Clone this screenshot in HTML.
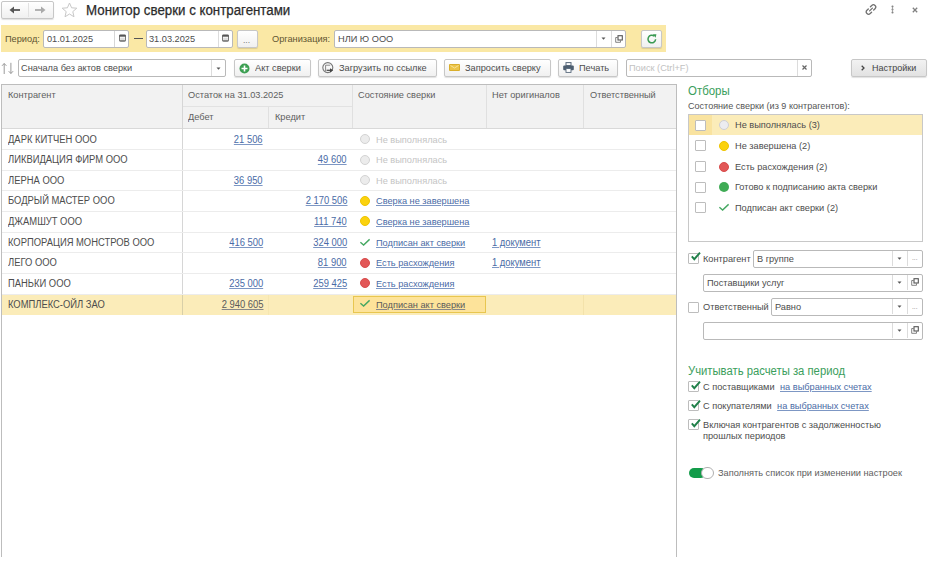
<!DOCTYPE html>
<html><head><meta charset="utf-8">
<style>
*{box-sizing:border-box;margin:0;padding:0}
html,body{width:934px;height:563px;overflow:hidden;background:#fff}
body{font-family:"Liberation Sans",sans-serif;font-size:9.2px;color:#4d4d4d;position:relative}
.a{position:absolute}
.t{position:absolute;white-space:nowrap;line-height:12px;font-size:9.8px;transform:scaleX(0.94);transform-origin:0 0}
.tr{transform-origin:100% 0}
.inp{position:absolute;background:#fff;border:1px solid #b9b9b9;border-radius:2px}
.btn{position:absolute;background:linear-gradient(#fff,#f0f0f0);border:1px solid #c7c7c7;border-radius:2px;box-shadow:0 1px 1px rgba(0,0,0,.12)}
.div{position:absolute;top:0;bottom:0;width:1px;background:#dcdcdc}
.lnk{color:#4a6ba6;text-decoration:underline;text-decoration-color:#7d97c4}
.hl{position:absolute;background:#dedede;}
.cb{position:absolute;width:11px;height:11px;border:1px solid #bdbdbd;background:#fff;border-radius:1px}
.circ{position:absolute;width:10px;height:10px;border-radius:50%}
.green{color:#3a9e5c}
.r{font-size:10px}
.lnk.cur{color:#5a5a5a;text-decoration-color:#888}
.hd{color:#555}
</style></head><body>

<!-- title bar -->
<div class="btn" style="left:1px;top:1px;width:53px;height:18px;"></div>
<div class="a" style="left:28px;top:3px;width:1px;height:14px;background:#e2e2e2"></div>
<svg class="a" style="left:9px;top:6px" width="12" height="8" viewBox="0 0 12 8"><path d="M4 4H11" stroke="#555" stroke-width="1.8"/><path d="M0.5 4L5 0.5V7.5Z" fill="#555"/></svg>
<svg class="a" style="left:34px;top:6px" width="12" height="8" viewBox="0 0 12 8"><path d="M1 4H8" stroke="#aaa" stroke-width="1.8"/><path d="M11.5 4L7 0.5V7.5Z" fill="#aaa"/></svg>
<svg class="a" style="left:61px;top:2px" width="17" height="16" viewBox="0 0 17 16"><path d="M8.5 1L10.6 5.8L15.8 6.2L11.8 9.6L13 14.8L8.5 12L4 14.8L5.2 9.6L1.2 6.2L6.4 5.8Z" stroke="#c8c8c8" stroke-width="1" fill="none"/></svg>
<div class="t" style="left:85.6px;top:2px;font-size:14px;line-height:17px;color:#2b2b2b;-webkit-text-stroke:0.25px #2b2b2b;transform:scaleX(0.95);transform-origin:0 0">Монитор сверки с контрагентами</div>

<svg class="a" style="left:864px;top:3px" width="14" height="13" viewBox="0 0 14 13"><g transform="rotate(-45 7 6.5)" fill="none" stroke="#707070" stroke-width="1.3" stroke-linecap="round"><path d="M5.5 4.2H3.6a2.3 2.3 0 0 0 0 4.6H5.5"/><path d="M8.5 4.2H10.4a2.3 2.3 0 0 1 0 4.6H8.5"/><path d="M5 6.5H9"/></g></svg>
<svg class="a" style="left:890px;top:5px" width="5" height="9" viewBox="0 0 5 9"><circle cx="2.5" cy="1.5" r="1" fill="#777"/><circle cx="2.5" cy="4.5" r="1" fill="#777"/><circle cx="2.5" cy="7.5" r="1" fill="#777"/><path d="M2.5 1.5V7.5" stroke="#999" stroke-width="0.8"/></svg>
<svg class="a" style="left:911.5px;top:6.5px" width="6" height="6" viewBox="0 0 6 6"><path d="M0.8 0.8L5.2 5.2M5.2 0.8L0.8 5.2" stroke="#808080" stroke-width="1.3"/></svg>

<!-- yellow bar -->
<div class="a" style="left:1px;top:25px;width:665px;height:26.5px;background:#fae8a5"></div>
<div class="t" style="left:5px;top:33px;color:#5f5532">Период:</div>
<div class="inp" style="left:43px;top:30px;width:86px;height:18px;"></div>
<div class="a" style="left:114px;top:31px;width:1px;height:16px;background:#d6d6d6"></div>
<div class="t" style="left:47px;top:33px;color:#4d4d4d">01.01.2025</div>
<svg class="a" style="left:118.5px;top:34px" width="7" height="8" viewBox="0 0 7 8"><rect x="0.5" y="1" width="6" height="6.2" rx="0.8" fill="none" stroke="#6a6a6a" stroke-width="0.9"/><rect x="0.3" y="0.8" width="6.4" height="1.9" fill="#555"/><rect x="1.2" y="3.6" width="4.6" height="2.6" fill="#ddd"/><rect x="0.5" y="6.3" width="6" height="1" fill="#666"/></svg>
<div class="a" style="left:134px;top:38px;width:9px;height:1px;background:#555"></div>
<div class="inp" style="left:146px;top:30px;width:87px;height:18px;"></div>
<div class="a" style="left:218px;top:31px;width:1px;height:16px;background:#dcdcdc"></div>
<div class="t" style="left:149px;top:33px;color:#4d4d4d">31.03.2025</div>
<svg class="a" style="left:221.5px;top:34px" width="7" height="8" viewBox="0 0 7 8"><rect x="0.5" y="1" width="6" height="6.2" rx="0.8" fill="none" stroke="#6a6a6a" stroke-width="0.9"/><rect x="0.3" y="0.8" width="6.4" height="1.9" fill="#555"/><rect x="1.2" y="3.6" width="4.6" height="2.6" fill="#ddd"/><rect x="0.5" y="6.3" width="6" height="1" fill="#666"/></svg>
<div class="btn" style="left:237px;top:30px;width:21px;height:18px;"></div>
<div class="t" style="left:242.5px;top:34px;color:#777;font-size:9px">...</div>
<div class="t" style="left:272px;top:33px;color:#5f5532">Организация:</div>
<div class="inp" style="left:334px;top:30px;width:292px;height:18px;"></div>
<div class="t" style="left:338px;top:33px;color:#4d4d4d">НЛИ Ю ООО</div>
<div class="a" style="left:596px;top:31px;width:1px;height:16px;background:#dcdcdc"></div>
<div class="a" style="left:611px;top:31px;width:1px;height:16px;background:#dcdcdc"></div>
<svg class="a" style="left:601px;top:37px" width="5" height="3" viewBox="0 0 5 3"><path d="M0.5 0.5H4.5L2.5 2.7Z" fill="#555"/></svg>
<svg class="a" style="left:615px;top:34.5px" width="8" height="8" viewBox="0 0 8 8"><path d="M2.5 2.5H0.7V7.3H5.5V5.5" fill="none" stroke="#777" stroke-width="0.9"/><rect x="3" y="0.7" width="4.3" height="4.3" fill="#fff" stroke="#555" stroke-width="1.1"/></svg>
<div class="btn" style="left:641px;top:30px;width:21px;height:17.5px;"></div>
<svg class="a" style="left:645.5px;top:33px" width="12" height="12" viewBox="0 0 12 12"><path d="M9.6 6.3A3.8 3.8 0 1 1 8.2 3.1" stroke="#3a9a52" stroke-width="1.5" fill="none"/><path d="M6.8 1.2L10.4 1.3L9.6 4.8Z" fill="#3a9a52"/></svg>

<!-- toolbar row -->
<svg class="a" style="left:0px;top:62px" width="14" height="13" viewBox="0 0 14 13"><path d="M4.2 12V1.5M2 3.8L4.2 1.5L6.4 3.8" stroke="#9a9a9a" stroke-width="1" fill="none"/><path d="M10.9 0.8V11.5M8.7 9.2L10.9 11.5L13.1 9.2" stroke="#9a9a9a" stroke-width="1" fill="none"/></svg>
<div class="inp" style="left:18px;top:59px;width:208px;height:18px;"></div>
<div class="t" style="left:21px;top:62px;color:#4d4d4d">Сначала без актов сверки</div>
<div class="a" style="left:211px;top:60px;width:1px;height:16px;background:#dcdcdc"></div>
<svg class="a" style="left:216px;top:67px" width="5" height="3" viewBox="0 0 5 3"><path d="M0.5 0.5H4.5L2.5 2.7Z" fill="#555"/></svg>

<div class="btn" style="left:234px;top:59px;width:77px;height:18px;"></div>
<svg class="a" style="left:239px;top:63px" width="11" height="11" viewBox="0 0 11 11"><circle cx="5.5" cy="5.5" r="5" fill="#3c9f52"/><path d="M5.5 2.5V8.5M2.5 5.5H8.5" stroke="#fff" stroke-width="1.6"/></svg>
<div class="t" style="left:255px;top:62px">Акт сверки</div>

<div class="btn" style="left:318px;top:59px;width:119px;height:18px;"></div>
<svg class="a" style="left:322px;top:62px" width="12" height="12" viewBox="0 0 12 12"><circle cx="5.8" cy="5.6" r="5" fill="none" stroke="#777" stroke-width="1.1"/><path d="M3.6 9.2V3.2H8.2" fill="none" stroke="#888" stroke-width="1"/><path d="M4.6 8.3H8.5" stroke="#444" stroke-width="1.2"/><path d="M8 6.2L11.2 8.3L8 10.4Z" fill="#444"/></svg>
<div class="t" style="left:339px;top:62px">Загрузить по ссылке</div>

<div class="btn" style="left:444px;top:59px;width:107px;height:18px;"></div>
<svg class="a" style="left:449px;top:64px" width="11" height="7" viewBox="0 0 11 7"><rect x="0" y="0" width="11" height="7" rx="1" fill="#d9ae2c"/><rect x="1" y="1" width="9" height="5" fill="#ecc448"/><path d="M1.5 1.5L5.5 4L9.5 1.5" stroke="#f8e39a" stroke-width="1" fill="none"/></svg>
<div class="t" style="left:465px;top:62px">Запросить сверку</div>

<div class="btn" style="left:558px;top:59px;width:60px;height:18px;"></div>
<svg class="a" style="left:563px;top:62px" width="11" height="11" viewBox="0 0 11 11"><rect x="3" y="0.6" width="5" height="3" fill="none" stroke="#56677a" stroke-width="1"/><rect x="0.2" y="3.4" width="10.6" height="4.8" rx="1" fill="#4d5e70"/><rect x="3" y="6.6" width="5" height="3.8" fill="#fff" stroke="#56677a" stroke-width="0.9"/></svg>
<div class="t" style="left:579px;top:62px">Печать</div>

<div class="inp" style="left:626px;top:59px;width:186px;height:18px;"></div>
<div class="t" style="left:629px;top:62px;color:#c2c2c2">Поиск (Ctrl+F)</div>
<div class="a" style="left:797px;top:60px;width:1px;height:16px;background:#dcdcdc"></div>
<svg class="a" style="left:802px;top:65px" width="5" height="5" viewBox="0 0 5 5"><path d="M0.5 0.5L4.5 4.5M4.5 0.5L0.5 4.5" stroke="#666" stroke-width="1.2"/></svg>

<div class="btn" style="left:851px;top:59px;width:76px;height:18px;background:linear-gradient(#f2f2f2,#e2e2e2)"></div>
<svg class="a" style="left:861px;top:65px" width="4" height="6" viewBox="0 0 4 6"><path d="M0.7 0.7L3 3L0.7 5.3" stroke="#444" stroke-width="1.3" fill="none"/></svg>
<div class="t" style="left:872px;top:62px;color:#444;transform:scaleX(0.92)">Настройки</div>

<!-- table -->
<div class="a" style="left:1px;top:84px;width:676px;height:472.5px;border:1px solid #bdbdbd;border-bottom:none"></div>
<div class="a" style="left:2px;top:85px;width:674px;height:44px;background:#f2f2f2;border-bottom:1px solid #d9d9d9"></div>
<div class="a" style="left:182px;top:85px;width:1px;height:210px;background:#d6d6d6"></div>
<div class="a" style="left:183px;top:106px;width:170px;height:1px;background:#e2e2e2"></div>
<div class="a" style="left:268px;top:107px;width:1px;height:21px;background:#e0e0e0"></div>
<div class="a" style="left:352px;top:85px;width:1px;height:43px;background:#e0e0e0"></div>
<div class="a" style="left:486px;top:85px;width:1px;height:43px;background:#e0e0e0"></div>
<div class="a" style="left:583px;top:85px;width:1px;height:43px;background:#e0e0e0"></div>
<div class="t" style="left:7.8px;top:88.6px;color:#606060">Контрагент</div>
<div class="t" style="left:188px;top:89px;color:#606060">Остаток на 31.03.2025</div>
<div class="t" style="left:188px;top:110.8px;color:#606060">Дебет</div>
<div class="t" style="left:275px;top:110.8px;color:#606060">Кредит</div>
<div class="t" style="left:358px;top:89px;color:#606060">Состояние сверки</div>
<div class="t" style="left:492px;top:89px;color:#606060">Нет оригиналов</div>
<div class="t" style="left:590px;top:89px;color:#606060">Ответственный</div>

<div class="a" style="left:2px;top:149.22px;width:674px;height:1px;background:#ececec"></div>
<div class="t r" style="left:7.5px;top:133.60px">ДАРК КИТЧЕН ООО</div>
<div class="t tr r lnk" style="right:671px;top:133.60px">21 506</div>
<div class="circ" style="left:360px;top:133.91px;background:#ececec;border:1px solid #d3d3d3"></div>
<div class="t" style="left:376px;top:133.60px;color:#c4c4c4">Не выполнялась</div>
<div class="a" style="left:2px;top:169.84px;width:674px;height:1px;background:#ececec"></div>
<div class="t r" style="left:7.5px;top:154.22px">ЛИКВИДАЦИЯ ФИРМ ООО</div>
<div class="t tr r lnk" style="right:587px;top:154.22px">49 600</div>
<div class="circ" style="left:360px;top:154.53px;background:#ececec;border:1px solid #d3d3d3"></div>
<div class="t" style="left:376px;top:154.22px;color:#c4c4c4">Не выполнялась</div>
<div class="a" style="left:2px;top:190.46px;width:674px;height:1px;background:#ececec"></div>
<div class="t r" style="left:7.5px;top:174.84px">ЛЕРНА ООО</div>
<div class="t tr r lnk" style="right:671px;top:174.84px">36 950</div>
<div class="circ" style="left:360px;top:175.15px;background:#ececec;border:1px solid #d3d3d3"></div>
<div class="t" style="left:376px;top:174.84px;color:#c4c4c4">Не выполнялась</div>
<div class="a" style="left:2px;top:211.08px;width:674px;height:1px;background:#ececec"></div>
<div class="t r" style="left:7.5px;top:195.46px">БОДРЫЙ МАСТЕР ООО</div>
<div class="t tr r lnk" style="right:587px;top:195.46px">2 170 506</div>
<div class="circ" style="left:360px;top:195.77px;background:#fbd20e;border:1px solid #eec400"></div>
<div class="t lnk" style="left:376px;top:195.46px">Сверка не завершена</div>
<div class="a" style="left:2px;top:231.70px;width:674px;height:1px;background:#ececec"></div>
<div class="t r" style="left:7.5px;top:216.08px">ДЖАМШУТ ООО</div>
<div class="t tr r lnk" style="right:587px;top:216.08px">111 740</div>
<div class="circ" style="left:360px;top:216.39px;background:#fbd20e;border:1px solid #eec400"></div>
<div class="t lnk" style="left:376px;top:216.08px">Сверка не завершена</div>
<div class="a" style="left:2px;top:252.32px;width:674px;height:1px;background:#ececec"></div>
<div class="t r" style="left:7.5px;top:236.70px">КОРПОРАЦИЯ МОНСТРОВ ООО</div>
<div class="t tr r lnk" style="right:671px;top:236.70px">416 500</div>
<div class="t tr r lnk" style="right:587px;top:236.70px">324 000</div>
<svg class="a" style="left:359px;top:237.51px" width="11" height="8" viewBox="0 0 11 8"><path d="M1.4 4.3L4.6 7L10.6 1.3" stroke="#45a862" stroke-width="1.4" fill="none"/></svg>
<div class="t lnk" style="left:376px;top:236.70px">Подписан акт сверки</div>
<div class="t r lnk" style="left:492px;top:236.70px">1 документ</div>
<div class="a" style="left:2px;top:272.94px;width:674px;height:1px;background:#ececec"></div>
<div class="t r" style="left:7.5px;top:257.32px">ЛЕГО ООО</div>
<div class="t tr r lnk" style="right:587px;top:257.32px">81 900</div>
<div class="circ" style="left:360px;top:257.63px;background:#e25757;border:1px solid #d84c4c"></div>
<div class="t lnk" style="left:376px;top:257.32px">Есть расхождения</div>
<div class="t r lnk" style="left:492px;top:257.32px">1 документ</div>
<div class="a" style="left:2px;top:293.56px;width:674px;height:1px;background:#ececec"></div>
<div class="t r" style="left:7.5px;top:277.94px">ПАНЬКИ ООО</div>
<div class="t tr r lnk" style="right:671px;top:277.94px">235 000</div>
<div class="t tr r lnk" style="right:587px;top:277.94px">259 425</div>
<div class="circ" style="left:360px;top:278.25px;background:#e25757;border:1px solid #d84c4c"></div>
<div class="t lnk" style="left:376px;top:277.94px">Есть расхождения</div>
<div class="a" style="left:2px;top:294.56px;width:674px;height:20.02px;background:#fbecb9"></div>
<div class="a" style="left:182px;top:294.56px;width:1px;height:20.02px;background:#d8cfa8"></div>
<div class="a" style="left:268px;top:294.56px;width:1px;height:20.02px;background:#f6e6b0"></div>
<div class="a" style="left:583px;top:294.56px;width:1px;height:20.02px;background:#f3e2aa"></div>
<div class="a" style="left:353px;top:295.56px;width:133px;height:17.62px;background:#fde39a;border:1px solid #e8c650"></div>
<div class="t r" style="left:7.5px;top:298.56px">КОМПЛЕКС-ОЙЛ ЗАО</div>
<div class="t tr r lnk cur" style="right:671px;top:298.56px">2 940 605</div>
<svg class="a" style="left:359px;top:299.37px" width="11" height="8" viewBox="0 0 11 8"><path d="M1.4 4.3L4.6 7L10.6 1.3" stroke="#45a862" stroke-width="1.4" fill="none"/></svg>
<div class="t lnk cur" style="left:376px;top:298.56px">Подписан акт сверки</div>

<!-- right panel -->
<div class="t green" style="left:688px;top:84px;font-size:12.2px;line-height:14px">Отборы</div>
<div class="t" style="left:688px;top:100px;transform:scaleX(0.925);color:#555">Состояние сверки (из 9 контрагентов):</div>
<div class="a" style="left:688px;top:114px;width:235px;height:128px;border:1px solid #c8c8c8"></div>
<div class="a" style="left:689px;top:115px;width:233px;height:20px;background:#fbecb9"></div>
<div class="a" style="left:689px;top:115px;width:23px;height:20px;background:#f9e3a0"></div>

<div class="cb" style="left:694.5px;top:119.80px"></div>
<div class="circ" style="left:719px;top:120.30px;background:#ececf0;border:1px solid #cfcfd3"></div>
<div class="t" style="left:735px;top:119.30px;color:#4d4d4d">Не выполнялась (3)</div>
<div class="cb" style="left:694.5px;top:140.42px"></div>
<div class="circ" style="left:719px;top:140.92px;background:#fbd20e;border:1px solid #eec400"></div>
<div class="t" style="left:735px;top:139.92px;color:#4d4d4d">Не завершена (2)</div>
<div class="cb" style="left:694.5px;top:161.04px"></div>
<div class="circ" style="left:719px;top:161.54px;background:#e25757;border:1px solid #d84c4c"></div>
<div class="t" style="left:735px;top:160.54px;color:#4d4d4d">Есть расхождения (2)</div>
<div class="cb" style="left:694.5px;top:181.66px"></div>
<div class="circ" style="left:719px;top:182.16px;background:#3fab55"></div>
<div class="t" style="left:735px;top:181.16px;color:#4d4d4d">Готово к подписанию акта сверки</div>
<div class="cb" style="left:694.5px;top:202.28px"></div>
<svg class="a" style="left:718px;top:203.28px" width="11" height="8" viewBox="0 0 11 8"><path d="M1.4 4.3L4.6 7L10.6 1.3" stroke="#45a862" stroke-width="1.4" fill="none"/></svg>
<div class="t" style="left:735px;top:201.78px;color:#4d4d4d">Подписан акт сверки (2)</div>
<!-- filters -->
<!-- filter rows -->
<div class="cb" style="left:688px;top:253px;"></div>
<svg class="a" style="left:690px;top:251px" width="11" height="11" viewBox="0 0 11 11"><path d="M1.8 5.3L4.3 8.2L10 1.6" stroke="#1f8049" stroke-width="1.9" fill="none"/></svg>
<div class="t" style="left:703px;top:252.6px">Контрагент</div>
<div class="inp" style="left:753px;top:249.5px;width:170px;height:18px;"></div>
<div class="t" style="left:757px;top:252.6px">В группе</div>
<div class="a" style="left:892px;top:251px;width:1px;height:15px;background:#dcdcdc"></div>
<div class="a" style="left:907px;top:251px;width:1px;height:15px;background:#dcdcdc"></div>
<svg class="a" style="left:897px;top:257px" width="5" height="3" viewBox="0 0 5 3"><path d="M0.5 0.5H4.5L2.5 2.7Z" fill="#555"/></svg>
<div class="t" style="left:912px;top:252px;color:#888;font-size:7px">...</div>

<div class="inp" style="left:703px;top:274px;width:220px;height:18px;"></div>
<div class="t" style="left:707px;top:276.6px">Поставщики услуг</div>
<div class="a" style="left:892px;top:275px;width:1px;height:15px;background:#dcdcdc"></div>
<div class="a" style="left:907px;top:275px;width:1px;height:15px;background:#dcdcdc"></div>
<svg class="a" style="left:897px;top:281px" width="5" height="3" viewBox="0 0 5 3"><path d="M0.5 0.5H4.5L2.5 2.7Z" fill="#555"/></svg>
<svg class="a" style="left:911px;top:278px" width="8" height="8" viewBox="0 0 8 8"><path d="M2.5 2.5H0.7V7.3H5.5V5.5" fill="none" stroke="#777" stroke-width="0.9"/><rect x="3" y="0.7" width="4.3" height="4.3" fill="#fff" stroke="#555" stroke-width="1.1"/></svg>

<div class="cb" style="left:688px;top:302px;"></div>
<div class="t" style="left:703px;top:301px">Ответственный</div>
<div class="inp" style="left:771px;top:298px;width:152px;height:18px;"></div>
<div class="t" style="left:775px;top:301px">Равно</div>
<div class="a" style="left:892px;top:299px;width:1px;height:15px;background:#dcdcdc"></div>
<div class="a" style="left:907px;top:299px;width:1px;height:15px;background:#dcdcdc"></div>
<svg class="a" style="left:897px;top:305px" width="5" height="3" viewBox="0 0 5 3"><path d="M0.5 0.5H4.5L2.5 2.7Z" fill="#555"/></svg>
<div class="t" style="left:912px;top:301px;color:#888;font-size:7px">...</div>

<div class="inp" style="left:703px;top:322px;width:220px;height:18px;"></div>
<div class="a" style="left:892px;top:323px;width:1px;height:15px;background:#dcdcdc"></div>
<div class="a" style="left:907px;top:323px;width:1px;height:15px;background:#dcdcdc"></div>
<svg class="a" style="left:897px;top:329px" width="5" height="3" viewBox="0 0 5 3"><path d="M0.5 0.5H4.5L2.5 2.7Z" fill="#555"/></svg>
<svg class="a" style="left:911px;top:326px" width="8" height="8" viewBox="0 0 8 8"><path d="M2.5 2.5H0.7V7.3H5.5V5.5" fill="none" stroke="#777" stroke-width="0.9"/><rect x="3" y="0.7" width="4.3" height="4.3" fill="#fff" stroke="#555" stroke-width="1.1"/></svg>

<div class="t green" style="left:688px;top:364px;font-size:12px;line-height:14px">Учитывать расчеты за период</div>

<div class="cb" style="left:688px;top:381px;"></div>
<svg class="a" style="left:690px;top:380px" width="11" height="11" viewBox="0 0 11 11"><path d="M1.8 5.3L4.3 8.2L10 1.6" stroke="#1f8049" stroke-width="1.9" fill="none"/></svg>
<div class="t" style="left:703px;top:381px">С поставщиками <span class="lnk" style="margin-left:3px">на выбранных счетах</span></div>
<div class="cb" style="left:688px;top:400px;"></div>
<svg class="a" style="left:690px;top:399px" width="11" height="11" viewBox="0 0 11 11"><path d="M1.8 5.3L4.3 8.2L10 1.6" stroke="#1f8049" stroke-width="1.9" fill="none"/></svg>
<div class="t" style="left:703px;top:400px">С покупателями <span class="lnk" style="margin-left:3px">на выбранных счетах</span></div>
<div class="cb" style="left:688px;top:419px;"></div>
<svg class="a" style="left:690px;top:418px" width="11" height="11" viewBox="0 0 11 11"><path d="M1.8 5.3L4.3 8.2L10 1.6" stroke="#1f8049" stroke-width="1.9" fill="none"/></svg>
<div class="t" style="left:703px;top:419px">Включая контрагентов с задолженностью</div>
<div class="t" style="left:703px;top:430px">прошлых периодов</div>

<div class="a" style="left:689px;top:468px;width:17px;height:10px;border-radius:5px;background:#139c4a"></div>
<div class="a" style="left:701px;top:466.5px;width:12.5px;height:12.5px;border-radius:50%;background:#fff;border:1px solid #b0b0b0"></div>
<div class="t" style="left:718px;top:467px;color:#5e5e5e">Заполнять список при изменении настроек</div>
</body></html>
